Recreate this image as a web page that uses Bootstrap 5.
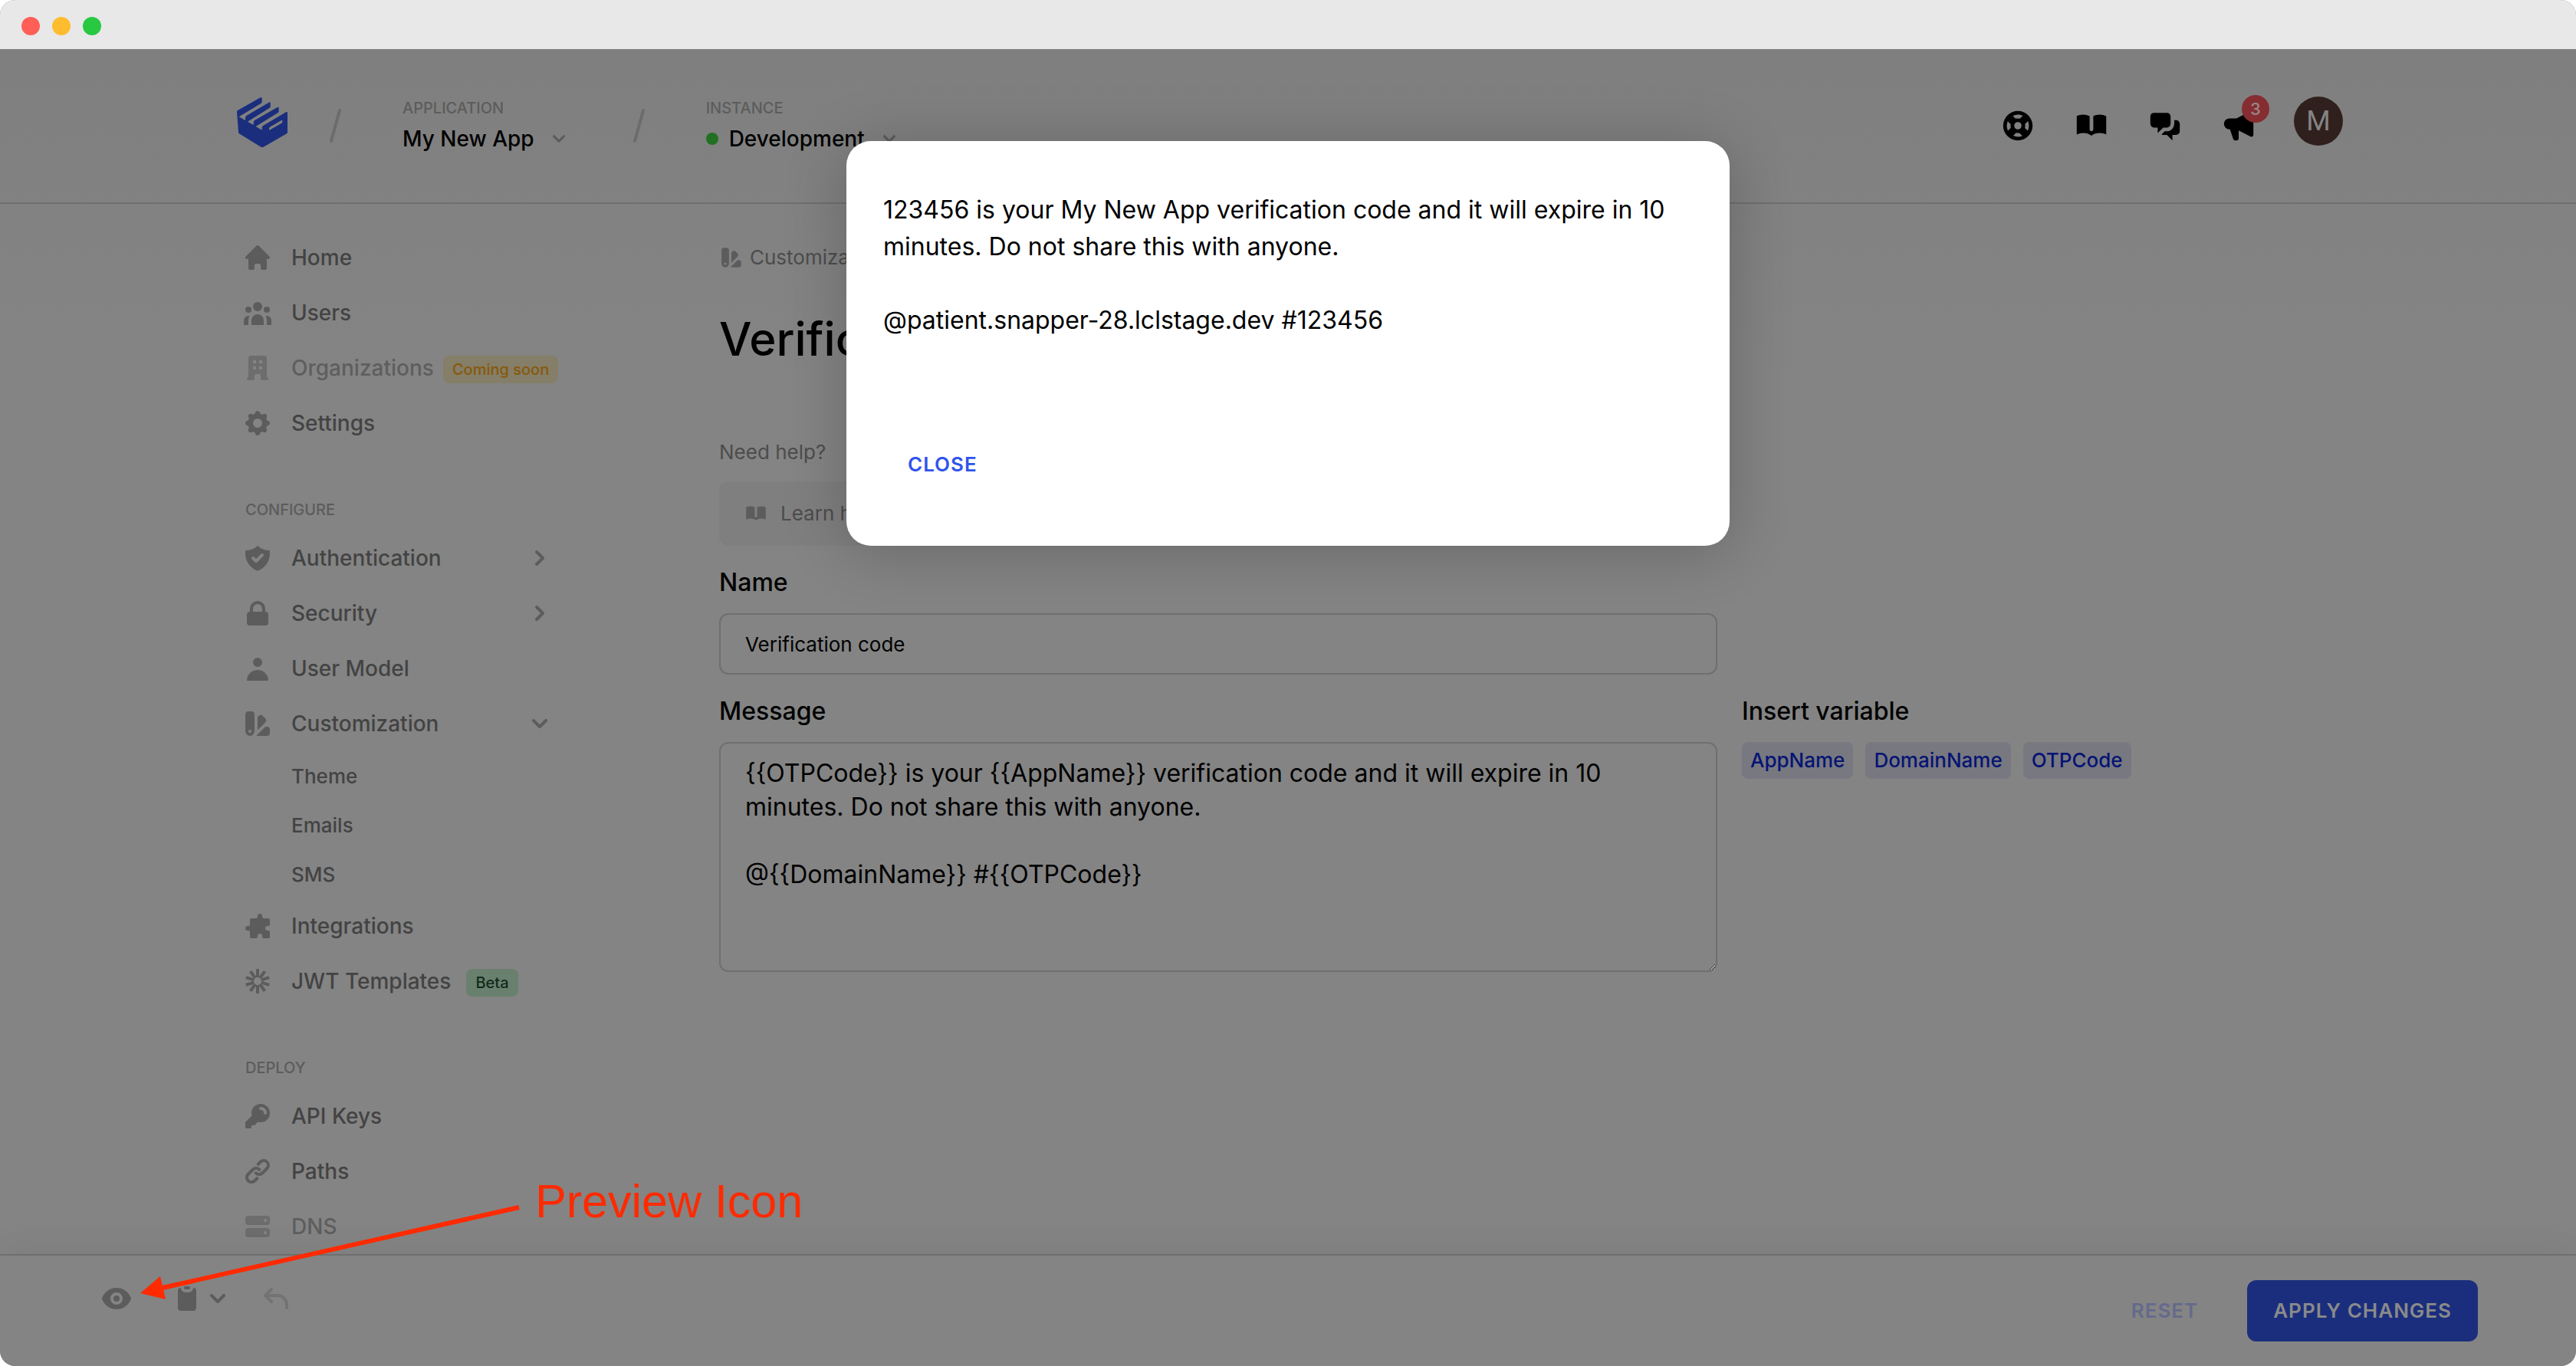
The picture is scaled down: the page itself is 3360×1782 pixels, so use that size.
<!DOCTYPE html>
<html lang="en">
<head>
<meta charset="utf-8">
<meta name="viewport" content="width=device-width, initial-scale=1">
<title>Verification code</title>
<link href="https://cdn.jsdelivr.net/npm/bootstrap@5.3.0/dist/css/bootstrap.min.css" rel="stylesheet">
<style>
  :root { --ink: #000; --muted: #434343; --faint: #5c5c5c; --line: #6f6f6f; --page: #848484; --brand: #1b2e7d; }
  html { background: #fff; }
  body { font-family: Inter, "Liberation Sans", sans-serif; font-size: 28px; line-height: 40px; color: var(--ink); background: transparent; }
  a { text-decoration: none; color: inherit; }
  .window { height: 100vh; border-radius: 20px; background: linear-gradient(#7f7f7f 64px, #848484 480px); }
  .titlebar { height: 64px; background: #e8e8e8; padding: 4px 28px 0; gap: 16px; }
  .light { width: 24px; height: 24px; border-radius: 50%; }
  .light-close { background: #ff5f57; }
  .light-min { background: #febc2e; }
  .light-max { background: #28c840; }
  .wrap { width: 100%; max-width: 2752px; margin: 0 auto; }
  .topbar { height: 202px; border-bottom: 2px solid var(--line); padding-top: 62px; }
  .crumbs { gap: 80px; }
  .logo { width: 66px; height: 66px; margin-left: 5px; fill: var(--brand); }
  .logo-gap { margin-right: -26px; }
  .slash { width: 16px; height: 44px; margin-top: 16px; stroke: #6c6c6c; stroke-width: 4; stroke-linecap: round; }
  .picker-block { padding-top: 3px; }
  .eyebrow { font-size: 20px; line-height: 24px; font-weight: 500; color: var(--faint); text-transform: uppercase; }
  .picker { border: 0; background: none; padding: 0; font-weight: 500; color: var(--ink); line-height: 32px; margin-top: 12px; }
  .picker svg { width: 32px; height: 32px; margin-left: 16px; fill: var(--faint); }
  .status { width: 16px; height: 16px; border-radius: 50%; background: #227022; margin-right: 14px; }
  .tools { gap: 48px; }
  .tools > a { position: relative; height: 48px; margin-top: 14px; display: block; }
  .tools svg { width: 48px; height: 48px; fill: #000; display: block; }
  .count { position: absolute; left: 28px; top: -16px; width: 36px; height: 36px; border-radius: 50%; background: #852d31; color: #9a8686; font-size: 22px; line-height: 36px; font-weight: 500; text-align: center; }
  .tools > .avatar { width: 64px; height: 64px; margin-top: 0; border-radius: 50%; background: #2f201d; color: #848484; font: 36px/64px Roboto, sans-serif; text-align: center; }
  .sidebar { width: 420px; padding: 34px 0 0 12px; }
  .side-link { height: 72px; font-weight: 500; color: var(--muted); }
  .side-link svg { width: 40px; height: 40px; fill: var(--faint); stroke: none; flex: none; }
  .side-link .glyph { margin-right: 24px; }
  .side-link .spokes { stroke: var(--faint); stroke-width: 2; }
  .side-link.dim { color: #5e5e5e; }
  .side-link.dim svg { fill: #6d6d6d; }
  .side-sub { display: block; height: 64px; line-height: 66px; padding-left: 64px; font-size: 26px; font-weight: 500; color: var(--muted); }
  .side-title { padding: 65px 0 15px 4px; }
  .pill { font-size: 20px; line-height: 36px; height: 36px; font-weight: 500; padding: 0 12px; border-radius: 8px; margin: 4px 0 0 12px; flex: none; white-space: nowrap; }
  .pill-soon { background: #857e68; color: #87590a; }
  .pill-beta { background: #68806d; color: #12291c; margin-left: 20px; }
  .content { padding: 50px 0 0 214px; }
  .small-text { font-size: 26px; color: #4c4c4c; }
  .small-text svg { width: 32px; height: 32px; fill: var(--faint); }
  .page-title { font-size: 60px; line-height: 76px; font-weight: 500; margin: 48px 0 90px; }
  .help-card { width: 520px; height: 84px; border-radius: 12px; background: #7f7f7f; padding: 0 32px; gap: 16px; margin: 18px 0 28px; }
  .field-label { font-size: 32px; line-height: 40px; font-weight: 500; display: block; margin: 0 0 20px; }
  .editor { gap: 32px; }
  .fields { width: 1302px; }
  .form-control.field { background: transparent; border: 2px solid var(--line); border-radius: 12px; color: var(--ink); padding: 0 32px; }
  .field-name { height: 80px; font-size: 26px; margin-bottom: 28px; }
  .form-control.field-message { height: 300px; padding: 17px 32px; font-size: 32px; line-height: 44px; resize: both; }
  .variables { padding-top: 168px; }
  .tags { gap: 16px; }
  .tag { border: 0; height: 48px; border-radius: 8px; background: #787880; color: #051474; font-size: 26px; line-height: 48px; font-weight: 500; padding: 0 11px; }
  .savebar { position: relative; height: 146px; border-top: 2px solid var(--line); background: #848484; box-shadow: 0 -8px 48px rgba(0,0,0,.05); padding: 32px 128px 0 132px; }
  .quick { padding-top: 4px; }
  .quick button { border: 0; background: none; padding: 0; display: flex; }
  .quick svg { width: 40px; height: 40px; fill: var(--faint); display: block; }
  .quick .undo svg { fill: #737373; }
  .act { border: 0; background: none; border-radius: 12px; height: 80px; font-size: 26px; font-weight: 600; letter-spacing: 1px; padding: 0 32px; }
  .act-reset { color: #646a8c; margin-right: 32px; }
  .act-apply { background: var(--brand); color: #8a8a8a; padding: 0 34px; }
  .act-close { color: #2f54eb; }
  .dialog-box { position: absolute; left: 50%; top: 184px; width: 1152px; height: 528px; margin-left: -576px; background: #fff; border-radius: 32px; padding: 66px 48px; font-size: 32px; line-height: 48px; box-shadow: 0 8px 80px rgba(0,0,0,.22); white-space: pre-line; }
  .dialog-box p { margin: 0 0 124px; }
  .callout { position: absolute; left: 180px; top: 1530px; width: 900px; height: 180px; pointer-events: none; }
  .callout span { position: absolute; left: 518px; top: 2px; font: 61px/70px "Liberation Sans", Arial, sans-serif; color: #ff2a00; }
</style>
</head>
<body>
<svg class="d-none" xmlns="http://www.w3.org/2000/svg">
  <symbol id="i-down" viewBox="0 0 20 20"><path d="M5.293 7.293a1 1 0 011.414 0L10 10.586l3.293-3.293a1 1 0 111.414 1.414l-4 4a1 1 0 01-1.414 0l-4-4a1 1 0 010-1.414z"/></symbol>
  <symbol id="i-right" viewBox="0 0 20 20"><path d="M7.293 14.707a1 1 0 010-1.414L10.586 10 7.293 6.707a1 1 0 011.414-1.414l4 4a1 1 0 010 1.414l-4 4a1 1 0 01-1.414 0z"/></symbol>
  <symbol id="i-book" viewBox="0 0 20 20"><path d="M9 4.804A7.968 7.968 0 005.5 4c-1.255 0-2.443.29-3.5.804v10A7.969 7.969 0 015.5 14c1.669 0 3.218.51 4.5 1.385A7.962 7.962 0 0114.5 14c1.255 0 2.443.29 3.5.804v-10A7.968 7.968 0 0014.5 4c-1.255 0-2.443.29-3.5.804V12a1 1 0 11-2 0V4.804z"/></symbol>
  <symbol id="i-swatch" viewBox="0 0 20 20"><path fill-rule="evenodd" d="M4 2a2 2 0 00-2 2v11a3 3 0 106 0V4a2 2 0 00-2-2H4zm1 14a1 1 0 100-2 1 1 0 000 2zm5-1.757l4.9-4.9a2 2 0 000-2.828L13.485 5.1a2 2 0 00-2.828 0L10 5.757v8.486zM16 18H9.071l6-6H16a2 2 0 012 2v2a2 2 0 01-2 2z"/></symbol>
</svg>

<div class="window d-flex flex-column overflow-hidden position-relative">
  <div class="titlebar d-flex align-items-center">
    <span class="light light-close"></span><span class="light light-min"></span><span class="light light-max"></span>
  </div>

  <header class="topbar flex-shrink-0">
    <div class="wrap d-flex justify-content-between align-items-start">
      <div class="crumbs d-flex align-items-start">
        <a href="#" class="logo-gap" aria-label="Dashboard"><svg class="logo d-block" viewBox="57 48 198 194"><path fill-rule="evenodd" d="M57 106q0-4 3-6l89-50q6-3 6 2v14q0 4-3 6L65 125l25 14v-10q0-5 4-8l88-52q6-3 6 2v13q0 4-3 6l-86 54 23 13v-10q0-5 4-8l89-51q6-3 6 2v13q0 4-3 6l-87 54 24 14v-9q0-5 4-8l90-53q6-3 6 2v76q0 4-3 6l-91 52q-5 3-10 0l-85-52q-3-2-3-6zM183 170q0-3 3-5l45-26q4-2 4 2v4q0 3-3 5l-45 26q-4 2-4-2z"/></svg></a>
        <svg class="slash" viewBox="0 0 16 44"><path d="M14 2L3 42"/></svg>
        <div class="picker-block">
          <div class="eyebrow">Application</div>
          <button class="picker d-flex align-items-center" type="button">My New App<svg><use href="#i-down"/></svg></button>
        </div>
        <svg class="slash" viewBox="0 0 16 44"><path d="M14 2L3 42"/></svg>
        <div class="picker-block">
          <div class="eyebrow">Instance</div>
          <button class="picker d-flex align-items-center" type="button"><span class="status"></span>Development<svg><use href="#i-down"/></svg></button>
        </div>
      </div>
      <nav class="tools d-flex align-items-start">
        <a href="#" aria-label="Support"><svg viewBox="0 0 20 20"><path fill-rule="evenodd" d="M18 10a8 8 0 11-16 0 8 8 0 0116 0zm-2 0c0 .993-.241 1.929-.668 2.754l-1.524-1.525a3.997 3.997 0 00.078-2.183l1.562-1.562C15.802 8.249 16 9.1 16 10zm-5.165 3.913l1.58 1.58A5.98 5.98 0 0110 16a5.976 5.976 0 01-2.516-.552l1.562-1.562a4.006 4.006 0 001.789.027zm-4.677-2.796a4.002 4.002 0 01-.041-2.08l-.08.08-1.53-1.533A5.98 5.98 0 004 10c0 .954.223 1.856.619 2.657l1.54-1.54zm1.088-6.45A5.974 5.974 0 0110 4c.954 0 1.856.223 2.657.619l-1.54 1.54a4.002 4.002 0 00-2.346.033L7.246 4.668zM12 10a2 2 0 11-4 0 2 2 0 014 0z"/></svg></a>
        <a href="#" aria-label="Docs"><svg><use href="#i-book"/></svg></a>
        <a href="#" aria-label="Chat"><svg viewBox="0 0 20 20"><path d="M2 5a2 2 0 012-2h7a2 2 0 012 2v4a2 2 0 01-2 2H9l-3 3v-3H4a2 2 0 01-2-2V5z"/><path d="M15 7v2a4 4 0 01-4 4H9.828l-1.766 1.767c.28.149.599.233.938.233h2l3 3v-3h2a2 2 0 002-2V9a2 2 0 00-2-2h-1z"/></svg></a>
        <a href="#" aria-label="News"><svg viewBox="0 0 20 20"><path d="M18 3a1 1 0 00-1.447-.894L8.763 6H5a3 3 0 000 6h.28l1.771 5.316A1 1 0 008 18h1a1 1 0 001-1v-4.382l6.553 3.276A1 1 0 0018 15V3z"/></svg><span class="count">3</span></a>
        <a href="#" class="avatar">M</a>
      </nav>
    </div>
  </header>

  <div class="wrap d-flex flex-grow-1 overflow-hidden">
    <nav class="sidebar flex-shrink-0">
      <a href="#" class="side-link d-flex align-items-center"><svg class="glyph" viewBox="0 0 20 20"><path d="M10.707 2.293a1 1 0 00-1.414 0l-7 7a1 1 0 001.414 1.414L4 10.414V17a1 1 0 001 1h2a1 1 0 001-1v-2a1 1 0 011-1h2a1 1 0 011 1v2a1 1 0 001 1h2a1 1 0 001-1v-6.586l.293.293a1 1 0 001.414-1.414l-7-7z"/></svg>Home</a>
      <a href="#" class="side-link d-flex align-items-center"><svg class="glyph" viewBox="0 0 20 20"><path d="M13 6a3 3 0 11-6 0 3 3 0 016 0zM18 8a2 2 0 11-4 0 2 2 0 014 0zM14 15a4 4 0 00-8 0v3h8v-3zM6 8a2 2 0 11-4 0 2 2 0 014 0zM16 18v-3a5.972 5.972 0 00-.75-2.906A3.005 3.005 0 0119 15v3h-3zM4.75 12.094A5.973 5.973 0 004 15v3H1v-3a3 3 0 013.75-2.906z"/></svg>Users</a>
      <a href="#" class="side-link dim d-flex align-items-center"><svg class="glyph" viewBox="0 0 20 20"><path fill-rule="evenodd" d="M4 4a2 2 0 012-2h8a2 2 0 012 2v12a1 1 0 110 2h-3a1 1 0 01-1-1v-2a1 1 0 00-1-1H9a1 1 0 00-1 1v2a1 1 0 01-1 1H4a1 1 0 110-2V4zm3 1h2v2H7V5zm2 4H7v2h2V9zm2-4h2v2h-2V5zm2 4h-2v2h2V9z"/></svg>Organizations<span class="pill pill-soon">Coming soon</span></a>
      <a href="#" class="side-link d-flex align-items-center"><svg class="glyph" viewBox="0 0 20 20"><path fill-rule="evenodd" d="M11.49 3.17c-.38-1.56-2.6-1.56-2.98 0a1.532 1.532 0 01-2.286.948c-1.372-.836-2.942.734-2.106 2.106.54.886.061 2.042-.947 2.287-1.561.379-1.561 2.6 0 2.978a1.532 1.532 0 01.947 2.287c-.836 1.372.734 2.942 2.106 2.106a1.532 1.532 0 012.287.947c.379 1.561 2.6 1.561 2.978 0a1.533 1.533 0 012.287-.947c1.372.836 2.942-.734 2.106-2.106a1.533 1.533 0 01.947-2.287c1.561-.379 1.561-2.6 0-2.978a1.532 1.532 0 01-.947-2.287c.836-1.372-.734-2.942-2.106-2.106a1.532 1.532 0 01-2.287-.947zM10 13a3 3 0 100-6 3 3 0 000 6z"/></svg>Settings</a>
      <div class="eyebrow side-title">Configure</div>
      <a href="#" class="side-link d-flex align-items-center"><svg class="glyph" viewBox="0 0 20 20"><path fill-rule="evenodd" d="M2.166 4.999A11.954 11.954 0 0010 1.944 11.954 11.954 0 0017.834 5c.11.65.166 1.32.166 2.001 0 5.225-3.34 9.67-8 11.317C5.34 16.67 2 12.225 2 7c0-.682.057-1.35.166-2.001zm11.541 3.708a1 1 0 00-1.414-1.414L9 10.586 7.707 9.293a1 1 0 00-1.414 1.414l2 2a1 1 0 001.414 0l4-4z"/></svg>Authentication<svg class="ms-auto"><use href="#i-right"/></svg></a>
      <a href="#" class="side-link d-flex align-items-center"><svg class="glyph" viewBox="0 0 20 20"><path fill-rule="evenodd" d="M5 9V7a5 5 0 0110 0v2a2 2 0 012 2v5a2 2 0 01-2 2H5a2 2 0 01-2-2v-5a2 2 0 012-2zm8-2v2H7V7a3 3 0 016 0z"/></svg>Security<svg class="ms-auto"><use href="#i-right"/></svg></a>
      <a href="#" class="side-link d-flex align-items-center"><svg class="glyph" viewBox="0 0 20 20"><path d="M10 9a3 3 0 100-6 3 3 0 000 6zm-7 9a7 7 0 1114 0H3z"/></svg>User Model</a>
      <a href="#" class="side-link d-flex align-items-center"><svg class="glyph"><use href="#i-swatch"/></svg>Customization<svg class="ms-auto"><use href="#i-down"/></svg></a>
      <a href="#" class="side-sub">Theme</a>
      <a href="#" class="side-sub">Emails</a>
      <a href="#" class="side-sub">SMS</a>
      <a href="#" class="side-link d-flex align-items-center"><svg class="glyph" viewBox="0 0 20 20"><path d="M10 3.5a1.5 1.5 0 013 0V4a1 1 0 001 1h3a1 1 0 011 1v3a1 1 0 01-1 1h-.5a1.5 1.5 0 000 3h.5a1 1 0 011 1v3a1 1 0 01-1 1h-3a1 1 0 01-1-1v-.5a1.5 1.5 0 00-3 0v.5a1 1 0 01-1 1H6a1 1 0 01-1-1v-3a1 1 0 00-1-1h-.5a1.5 1.5 0 010-3H4a1 1 0 001-1V6a1 1 0 011-1h3a1 1 0 001-1v-.5z"/></svg>Integrations</a>
      <a href="#" class="side-link d-flex align-items-center"><svg class="glyph spokes" viewBox="0 0 20 20"><path id="spoke" d="M10 2v5.5"/><use href="#spoke" transform="rotate(36 10 10)"/><use href="#spoke" transform="rotate(72 10 10)"/><use href="#spoke" transform="rotate(108 10 10)"/><use href="#spoke" transform="rotate(144 10 10)"/><use href="#spoke" transform="rotate(180 10 10)"/><use href="#spoke" transform="rotate(216 10 10)"/><use href="#spoke" transform="rotate(252 10 10)"/><use href="#spoke" transform="rotate(288 10 10)"/><use href="#spoke" transform="rotate(324 10 10)"/></svg>JWT Templates<span class="pill pill-beta">Beta</span></a>
      <div class="eyebrow side-title">Deploy</div>
      <a href="#" class="side-link d-flex align-items-center"><svg class="glyph" viewBox="0 0 20 20"><path fill-rule="evenodd" d="M18 8a6 6 0 01-7.743 5.743L10 14l-1 1-1 1H6v2H2v-4l4.257-4.257A6 6 0 1118 8zm-6-4a1 1 0 100 2 2 2 0 012 2 1 1 0 102 0 4 4 0 00-4-4z"/></svg>API Keys</a>
      <a href="#" class="side-link d-flex align-items-center"><svg class="glyph" viewBox="0 0 20 20"><path fill-rule="evenodd" d="M12.586 4.586a2 2 0 112.828 2.828l-3 3a2 2 0 01-2.828 0 1 1 0 00-1.414 1.414 4 4 0 005.656 0l3-3a4 4 0 00-5.656-5.656l-1.5 1.5a1 1 0 101.414 1.414l1.5-1.5zm-5 5a2 2 0 012.828 0 1 1 0 101.414-1.414 4 4 0 00-5.656 0l-3 3a4 4 0 105.656 5.656l1.5-1.5a1 1 0 10-1.414-1.414l-1.5 1.5a2 2 0 11-2.828-2.828l3-3z"/></svg>Paths</a>
      <a href="#" class="side-link dim d-flex align-items-center"><svg class="glyph" viewBox="0 0 20 20"><path fill-rule="evenodd" d="M2 5a2 2 0 012-2h12a2 2 0 012 2v2a2 2 0 01-2 2H4a2 2 0 01-2-2V5zm14 1a1 1 0 11-2 0 1 1 0 012 0zM2 13a2 2 0 012-2h12a2 2 0 012 2v2a2 2 0 01-2 2H4a2 2 0 01-2-2v-2zm14 1a1 1 0 11-2 0 1 1 0 012 0z"/></svg>DNS</a>
    </nav>

    <main class="content flex-grow-1">
      <div class="small-text d-flex align-items-center gap-2"><svg><use href="#i-swatch"/></svg>Customization</div>
      <h1 class="page-title">Verification code</h1>
      <div class="small-text">Need help?</div>
      <a href="#" class="help-card small-text d-flex align-items-center"><svg><use href="#i-book"/></svg>Learn how</a>
      <form class="editor d-flex align-items-start">
        <div class="fields">
          <label class="field-label" for="tplName">Name</label>
          <input id="tplName" class="form-control field field-name" type="text" value="Verification code">
          <label class="field-label" for="tplMessage">Message</label>
          <textarea id="tplMessage" class="form-control field field-message">{{OTPCode}} is your {{AppName}} verification code and it will expire in 10 minutes. Do not share this with anyone.

@{{DomainName}} #{{OTPCode}}</textarea>
        </div>
        <div class="variables">
          <div class="field-label">Insert variable</div>
          <div class="tags d-flex"><button type="button" class="tag">AppName</button><button type="button" class="tag">DomainName</button><button type="button" class="tag">OTPCode</button></div>
        </div>
      </form>
    </main>
  </div>

  <footer class="savebar flex-shrink-0 d-flex justify-content-between align-items-start">
    <div class="quick d-flex">
      <button type="button" class="me-5" aria-label="Preview"><svg viewBox="0 0 20 20"><path d="M10 12a2 2 0 100-4 2 2 0 000 4z"/><path fill-rule="evenodd" d="M.458 10C1.732 5.943 5.522 3 10 3s8.268 2.943 9.542 7c-1.274 4.057-5.064 7-9.542 7S1.732 14.057.458 10zM14 10a4 4 0 11-8 0 4 4 0 018 0z"/></svg></button>
      <button type="button" class="ms-1 me-4" aria-label="Templates"><svg viewBox="0 0 20 20"><path d="M8 3a1 1 0 011-1h2a1 1 0 110 2H9a1 1 0 01-1-1z"/><path d="M6 3a2 2 0 00-2 2v11a2 2 0 002 2h8a2 2 0 002-2V5a2 2 0 00-2-2 3 3 0 01-3 3H9a3 3 0 01-3-3z"/></svg><svg><use href="#i-down"/></svg></button>
      <button type="button" class="undo ms-2 ps-1" aria-label="Undo"><svg viewBox="0 0 20 20"><path d="M7.707 3.293a1 1 0 010 1.414L5.414 7H11a7 7 0 017 7v2a1 1 0 11-2 0v-2a5 5 0 00-5-5H5.414l2.293 2.293a1 1 0 11-1.414 1.414l-4-4a1 1 0 010-1.414l4-4a1 1 0 011.414 0z"/></svg></button>
    </div>
    <div class="d-flex">
      <button type="button" class="act act-reset">RESET</button>
      <button type="button" class="act act-apply">APPLY CHANGES</button>
    </div>
  </footer>

  <div class="dialog-box" role="dialog" aria-label="Message preview"><p>123456 is your My New App verification code and it will expire in 10 minutes. Do not share this with anyone.

@patient.snapper-28.lclstage.dev #123456</p><button type="button" class="act act-close">CLOSE</button></div>

  <div class="callout">
    <svg width="900" height="180" viewBox="180 1530 900 180"><path d="M677 1575L212 1680" stroke="#ff2a00" stroke-width="6" fill="none"/><path d="M183 1687L209 1665L216 1695z" fill="#ff2a00"/></svg>
    <span>Preview Icon</span>
  </div>
</div>
<script src="https://cdn.jsdelivr.net/npm/bootstrap@5.3.0/dist/js/bootstrap.bundle.min.js"></script>
</body>
</html>
